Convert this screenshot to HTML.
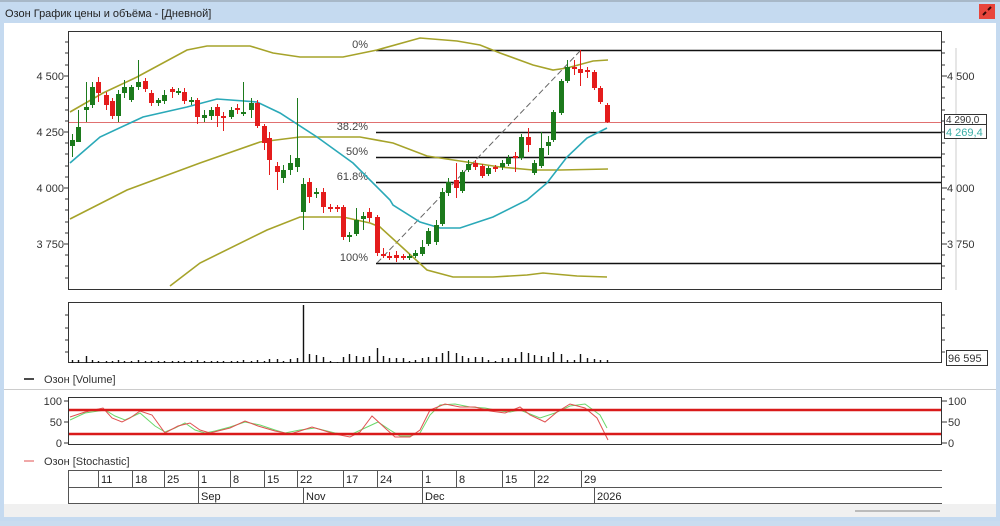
<!DOCTYPE html>
<html><head><meta charset="utf-8"><style>
body{margin:0;width:1000px;height:521px;overflow:hidden;background:#c9dcef;font-family:"Liberation Sans","DejaVu Sans",sans-serif}
</style></head><body>
<svg width="1000" height="521" xmlns="http://www.w3.org/2000/svg" font-family="Liberation Sans, DejaVu Sans, sans-serif">
<rect x="0" y="0" width="1000" height="521" fill="#c5daf0"/>
<rect x="0" y="0" width="1000" height="2" fill="#a8b8c8"/>
<rect x="4" y="23" width="992" height="494" fill="#ffffff"/>
<rect x="4" y="504" width="992" height="13" fill="#f0f0f0"/>
<text x="5" y="17" font-size="11" fill="#222">Озон График цены и объёма - [Дневной]</text>
<rect x="979" y="4" width="16" height="15" fill="#e8453c"/>
<path d="M983 15l3-3M988 10l3-3" stroke="#3a0a0a" stroke-width="2"/>
<line x1="956" y1="48" x2="956" y2="290" stroke="#ccc" stroke-width="1"/>
<!-- main chart -->
<rect x="68.5" y="31.5" width="873" height="258" fill="#fff" stroke="#333"/>
<g font-size="11" fill="#333">
<text x="64" y="80" text-anchor="end">4 500</text><text x="64" y="136" text-anchor="end">4 250</text>
<text x="64" y="192" text-anchor="end">4 000</text><text x="64" y="248" text-anchor="end">3 750</text>
<text x="947" y="80">4 500</text><text x="947" y="192">4 000</text><text x="947" y="248">3 750</text>
</g>
<g stroke="#333">
<path d="M64 76h4M64 132h4M64 188h4M64 244h4M942 76h5M942 188h5M942 244h5M942 132h3
M65 42h3M65 53h3M65 65h3M65 87h3M65 98h3M65 110h3M65 121h3M65 143h3M65 154h3M65 166h3M65 177h3M65 199h3M65 210h3M65 222h3M65 233h3M65 255h3M65 266h3M65 278h3
M942 42h3M942 53h3M942 65h3M942 87h3M942 98h3M942 110h3M942 121h3M942 143h3M942 154h3M942 166h3M942 177h3M942 199h3M942 210h3M942 222h3M942 233h3M942 255h3M942 266h3M942 278h3"/>
</g>
<line x1="69" y1="122.5" x2="941" y2="122.5" stroke="#e07070" stroke-width="1"/>
<g stroke="#111" stroke-width="1.6">
<line x1="376" y1="50.5" x2="941" y2="50.5"/><line x1="376" y1="132.5" x2="941" y2="132.5"/>
<line x1="376" y1="157.5" x2="941" y2="157.5"/><line x1="376" y1="182.5" x2="941" y2="182.5"/>
<line x1="376" y1="263.5" x2="941" y2="263.5"/>
</g>
<line x1="377" y1="263" x2="581" y2="50" stroke="#666" stroke-dasharray="6,3"/>
<g font-size="11" fill="#444" text-anchor="end">
<text x="368" y="48">0%</text><text x="368" y="130">38.2%</text><text x="368" y="155">50%</text>
<text x="368" y="180">61.8%</text><text x="368" y="261">100%</text>
</g>
<g fill="none" stroke-width="1.6">
<polyline stroke="#a6a32a" points="70,112 103,93 137,77 187,50 207,46 250,46 273,53 300,57 343,57 377,50 420,38 457,41 480,45 500,53 533,65 553,70 567,68 593,61 608,60"/>
<polyline stroke="#a6a32a" points="70,219 127,190 200,163 260,142 300,137 360,137 393,143 427,156 460,161 500,167 533,170 560,170 608,169"/>
<polyline stroke="#a6a32a" points="170,286 200,263 267,230 300,217 343,217 370,223 380,227 403,248 427,270 453,277 493,277 527,275 543,273 577,276 607,277"/>
<polyline stroke="#2aa9b8" points="70,163 100,137 143,117 187,107 217,99 257,102 280,113 317,137 353,163 390,200 393,205 420,222 440,228 460,228 493,217 527,200 547,183 567,157 587,138 607,128"/>
</g>
<!-- green candles -->
<path stroke="#1c7a1c" stroke-width="1" fill="none" d="M72.5 134V157M78.5 110V142M86.5 82V122M92.5 82V108M118.5 90V122M124.5 80V98M131.5 85V102M138.5 60V90M158.5 98V106M164.5 90V104M178.5 88V95M191.5 97V105M204.5 110V122M211.5 107V120M231.5 107V119M243.5 82V116M251.5 98V118M283.5 165V183M290.5 155V175M297.5 98V172M303.5 178V230M316.5 188V198M349.5 232V242M356.5 208V236M363.5 212V230M409.5 254V260M415.5 250V258M422.5 240V256M428.5 228V246M436.5 220V245M442.5 188V226M448.5 178V196M462.5 170V193M468.5 160V172M488.5 166V176M502.5 160V170M508.5 155V166M521.5 134V160M534.5 160V175M541.5 132V168M548.5 136V155M553.5 110V142M561.5 79V115M567.5 60V83"/>
<path stroke="#1c7a1c" stroke-width="5" fill="none" d="M72.5 140V146M78.5 127V142M86.5 107V110M92.5 87V105M118.5 94V116M124.5 87V93M131.5 87V100M138.5 82V87M158.5 100V103M164.5 95V101M178.5 91V93M191.5 100V102M204.5 115V118M211.5 110V116M231.5 110V117M243.5 112V114M251.5 103V110M283.5 170V178M290.5 163V170M297.5 158V167M303.5 184V212M316.5 192V194M349.5 235V237M356.5 220V234M363.5 216V219M409.5 256V258M415.5 253V256M422.5 247V254M428.5 231V244M436.5 225V242M442.5 192V224M448.5 182V193M462.5 172V191M468.5 164V170M488.5 168V174M502.5 163V167M508.5 158V164M521.5 137V158M534.5 163V173M541.5 148V166M548.5 142V146M553.5 112V140M561.5 81V113M567.5 67V81"/>
<!-- red candles -->
<path stroke="#e41c1c" stroke-width="1" fill="none" d="M98.5 77V102M106.5 92V110M112.5 98V119M145.5 78V92M151.5 90V106M172.5 87V98M184.5 88V104M197.5 98V124M217.5 104V127M223.5 112V131M237.5 104V114M257.5 100V128M264.5 124V150M269.5 132V175M277.5 162V190M309.5 178V203M323.5 188V213M330.5 204V212M337.5 205V212M343.5 205V240M369.5 208V222M377.5 215V256M383.5 248V258M389.5 252V260M396.5 251V262M403.5 254V260M456.5 163V198M475.5 160V170M482.5 164V178M495.5 165V172M515.5 152V172M528.5 128V152M574.5 60V75M580.5 50V86M587.5 67V78M594.5 70V90M600.5 86V104M607.5 103V123"/>
<path stroke="#e41c1c" stroke-width="5" fill="none" d="M98.5 82V93M106.5 95V105M112.5 101V116M145.5 81V89M151.5 93V103M172.5 89V92M184.5 92V101M197.5 100V117M217.5 107V116M223.5 116V118M237.5 108V110M257.5 103V126M264.5 126V143M269.5 138V160M277.5 166V172M309.5 182V197M323.5 192V207M330.5 207V209M337.5 207V209M343.5 207V237M369.5 212V218M377.5 217V253M383.5 254V256M389.5 256V258M396.5 255V258M403.5 256V258M456.5 180V188M475.5 163V167M482.5 166V176M495.5 167V169M515.5 156V158M528.5 137V145M574.5 67V69M580.5 69V73M587.5 70V72M594.5 72V88M600.5 88V102M607.5 105V122"/>
<!-- price labels right -->
<rect x="944.5" y="114.5" width="42" height="10" fill="#fff" stroke="#333"/>
<text x="946" y="123" font-size="10" fill="#333">4 290,0</text>
<rect x="944.5" y="124.5" width="42" height="14" fill="#fff" stroke="#333"/>
<text x="946" y="136" font-size="11" fill="#3aaea6">4 269,4</text>
<!-- volume -->
<rect x="68.5" y="302.5" width="873" height="60" fill="#fff" stroke="#333"/>
<path d="M942 315h3M942 328h3M942 340h3M942 352h3M65 315h3M65 328h3M65 340h3M65 352h3" stroke="#333"/>
<path stroke="#111" stroke-width="1.4" fill="none" d="M72.5 363v-3M78.5 363v-3M86.5 363v-7M92.5 363v-3M98.5 363v-2M106.5 363v-2M112.5 363v-2M118.5 363v-3M124.5 363v-2M131.5 363v-2M138.5 363v-3M145.5 363v-2M151.5 363v-2M158.5 363v-2M164.5 363v-2M172.5 363v-2M178.5 363v-2M184.5 363v-2M191.5 363v-2M197.5 363v-3M204.5 363v-2M211.5 363v-2M217.5 363v-2M223.5 363v-2M231.5 363v-2M237.5 363v-2M243.5 363v-3M251.5 363v-2M257.5 363v-3M264.5 363v-2M269.5 363v-4M277.5 363v-4M283.5 363v-2M290.5 363v-4M297.5 363v-5M303.5 363v-58M309.5 363v-9M316.5 363v-8M323.5 363v-6M330.5 363v-2M337.5 363v-1M343.5 363v-6M349.5 363v-9M356.5 363v-7M363.5 363v-6M369.5 363v-7M377.5 363v-15M383.5 363v-7M389.5 363v-5M396.5 363v-5M403.5 363v-5M409.5 363v-2M415.5 363v-3M422.5 363v-5M428.5 363v-6M436.5 363v-6M442.5 363v-10M448.5 363v-12M456.5 363v-10M462.5 363v-7M468.5 363v-5M475.5 363v-6M482.5 363v-6M488.5 363v-3M495.5 363v-2M502.5 363v-5M508.5 363v-5M515.5 363v-5M521.5 363v-11M528.5 363v-10M534.5 363v-8M541.5 363v-7M548.5 363v-6M553.5 363v-11M561.5 363v-9M567.5 363v-3M574.5 363v-3M580.5 363v-9M587.5 363v-5M594.5 363v-4M600.5 363v-3M607.5 363v-3"/>
<rect x="946.5" y="350.5" width="41" height="15" fill="#fff" stroke="#333"/>
<text x="948" y="362" font-size="11" fill="#333">96 595</text>
<line x1="24" y1="379" x2="34" y2="379" stroke="#111" stroke-width="1.5"/>
<text x="44" y="383" font-size="11" fill="#333">Озон [Volume]</text>
<line x1="4" y1="389.5" x2="996" y2="389.5" stroke="#ccc"/>
<!-- stoch -->
<rect x="68.5" y="397.5" width="873" height="47" fill="#fff" stroke="#333"/>
<g fill="none" stroke-width="1">
<polyline stroke="#6bd86b" points="70,420 85,413 105,410 115,416 125,420 140,413 155,426 165,432 175,428 185,423 195,430 205,433 215,431 230,427 245,422 260,425 275,430 285,433 300,430 315,428 335,433 350,435 365,428 378,422 390,430 400,436 410,436 420,433 430,415 440,405 455,404 470,407 485,408 500,411 510,412 520,410 530,414 540,418 555,413 570,406 585,404 600,415 607,428"/>
<polyline stroke="#e05050" points="70,417 85,412 103,408 112,418 122,422 130,418 140,411 152,415 165,433 178,426 190,423 200,430 210,433 230,428 245,421 258,426 275,431 290,434 300,431 312,427 335,434 350,437 360,432 372,416 385,428 395,437 410,437 420,430 430,410 445,404 460,407 475,407 490,411 505,413 520,407 530,415 545,422 557,412 570,404 585,408 597,418 608,440"/>
</g>
<line x1="69" y1="410" x2="941" y2="410" stroke="#d91a1a" stroke-width="2.5"/>
<line x1="69" y1="434" x2="941" y2="434" stroke="#d91a1a" stroke-width="2.5"/>
<path d="M64 401h4M64 422h4M64 443h4M942 401h5M942 422h5M942 443h5" stroke="#333"/>
<g font-size="11" fill="#333"><text x="62" y="405" text-anchor="end">100</text><text x="62" y="426" text-anchor="end">50</text><text x="62" y="447" text-anchor="end">0</text>
<text x="948" y="405">100</text><text x="948" y="426">50</text><text x="948" y="447">0</text></g>
<line x1="24" y1="461" x2="34" y2="461" stroke="#e05050" stroke-width="1"/>
<text x="44" y="465" font-size="11" fill="#333">Озон [Stochastic]</text>
<!-- date axis -->
<g stroke="#555">
<path d="M68 470.5h874M68 487.5h874M68 503.5h874M68.5 470v34M98.5 470v17M132.5 470v17M164.5 470v17M198.5 470v34M230.5 470v17M264.5 470v17M297.5 470v17M303.5 487v17M343.5 470v17M377.5 470v17M422.5 470v34M456.5 470v17M502.5 470v17M534.5 470v17M581.5 470v17M594.5 487v17"/>
</g>
<g font-size="11" fill="#222">
<text x="101" y="483">11</text><text x="135" y="483">18</text><text x="167" y="483">25</text><text x="201" y="483">1</text>
<text x="233" y="483">8</text><text x="267" y="483">15</text><text x="300" y="483">22</text><text x="346" y="483">17</text>
<text x="380" y="483">24</text><text x="425" y="483">1</text><text x="459" y="483">8</text><text x="505" y="483">15</text>
<text x="537" y="483">22</text><text x="584" y="483">29</text>
<text x="201" y="500">Sep</text><text x="306" y="500">Nov</text><text x="425" y="500">Dec</text><text x="597" y="500">2026</text>
</g>
<line x1="855" y1="511" x2="940" y2="511" stroke="#bbb" stroke-width="2"/>
</svg>
</body></html>
